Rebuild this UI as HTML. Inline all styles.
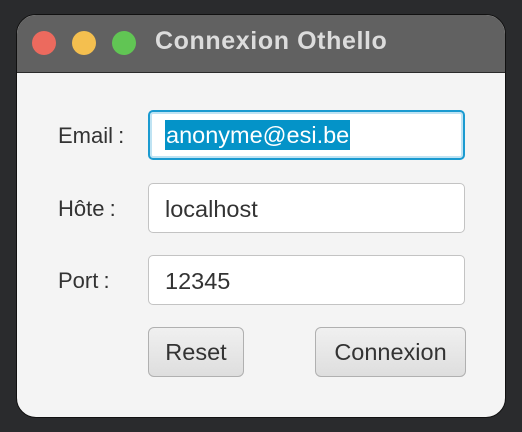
<!DOCTYPE html>
<html><head><style>
body{margin:0;width:522px;height:432px;background:#2a2b2d;font-family:"Liberation Sans",sans-serif;position:relative;overflow:hidden}
.win{position:absolute;left:16px;top:14px;width:490px;height:404px;border-radius:20px;background:#f4f4f4;overflow:hidden;border:1px solid #111;box-sizing:border-box}
.tb{position:absolute;left:0;top:0;right:0;height:57px;background:#616161;border-bottom:1px solid #2a2a2a}
.dot{position:absolute;top:16px;width:24px;height:24px;border-radius:50%}
.title{position:absolute;left:138px;top:12px;font-size:25px;font-weight:bold;color:#dcdcdc;letter-spacing:0.6px}
.lbl{position:absolute;left:58px;font-size:22px;color:#333;word-spacing:-1px}
.f{position:absolute;left:148px;width:317px;height:50px;box-sizing:border-box;border:1px solid #c3c3c3;border-radius:5px;background:#fff;font-size:23.5px;color:#333;padding:12px 0 0 16px}
.btn{position:absolute;top:327px;height:50px;box-sizing:border-box;border:1px solid #b0b0b0;border-radius:6px;background:linear-gradient(#f0f0f0,#dedede);font-size:23.5px;color:#333;text-align:center;padding-top:11px}
</style></head><body>
<div class="win"><div class="tb">
<div class="dot" style="left:15px;background:#ec6a5e"></div>
<div class="dot" style="left:55px;background:#f4bf4f"></div>
<div class="dot" style="left:95px;background:#61c554"></div>
<div class="title">Connexion Othello</div></div></div>
<div class="lbl" style="top:123px">Email :</div>
<div class="lbl" style="top:196px">Hôte :</div>
<div class="lbl" style="top:268px">Port :</div>
<div class="f" style="top:110px;border:2px solid #1a9ad0;box-shadow:0 0 0 2px #bfe3f3 inset;padding:10px 0 0 15px"><span style="background:#0493c8;color:#fff;padding:2px 1px">anonyme@esi.be</span></div>
<div class="f" style="top:183px">localhost</div>
<div class="f" style="top:255px">12345</div>
<div class="btn" style="left:148px;width:96px">Reset</div>
<div class="btn" style="left:315px;width:151px">Connexion</div>
</body></html>
